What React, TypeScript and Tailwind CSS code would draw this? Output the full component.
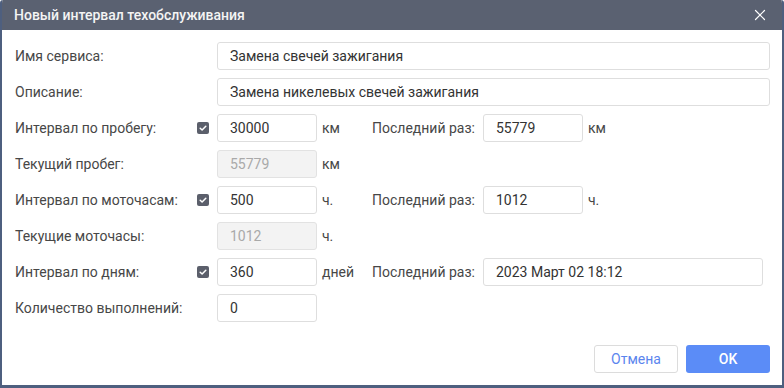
import { X } from 'lucide-react';

type FieldProps = {
  value: string;
  disabled?: boolean;
  className?: string;
};

function Field({ value, disabled = false, className = '' }: FieldProps) {
  return (
    <input
      readOnly
      value={value}
      disabled={disabled}
      className={`h-7 rounded-[3px] border px-3 text-[14px] outline-none ${
        disabled
          ? 'border-[#e2e2e2] bg-[#f3f3f3] text-[#a9a9a9]'
          : 'border-[#dedede] bg-white text-[#333]'
      } ${className}`}
    />
  );
}

function Check() {
  return (
    <span className="flex h-3 w-3 items-center justify-center rounded-[2px] bg-[#5b5f6b]">
      <svg viewBox="0 0 12 12" className="h-3 w-3">
        <path d="M3.2 6.2 L5.1 8 L8.8 4.2" fill="none" stroke="#fff" strokeWidth="1.5" strokeLinecap="round" strokeLinejoin="round" />
      </svg>
    </span>
  );
}

type IntervalRowProps = {
  label: string;
  value: string;
  unit: string;
  checked?: boolean;
  disabled?: boolean;
  last?: string;
  lastUnit?: string;
  lastWide?: boolean;
};

function IntervalRow({ label, value, unit, checked, disabled, last, lastUnit, lastWide }: IntervalRowProps) {
  return (
    <div className="flex h-7 items-center">
      <div className="w-[182px] shrink-0">{label}</div>
      <div className="flex w-5 shrink-0 items-center">{checked ? <Check /> : null}</div>
      <Field value={value} disabled={disabled} className="w-[100px] shrink-0" />
      <div className="w-[55px] shrink-0 pl-[5px]">{unit}</div>
      {last !== undefined ? (
        <>
          <div className="w-[111px] shrink-0">Последний раз:</div>
          <Field value={last} className={lastWide ? 'w-[280px] shrink-0' : 'w-[100px] shrink-0'} />
          {lastUnit ? <div className="pl-[5px]">{lastUnit}</div> : null}
        </>
      ) : null}
    </div>
  );
}

export default function App() {
  return (
    <div
      className="flex h-[388px] w-[784px] flex-col overflow-hidden rounded-t-[3px] border-x-2 border-b-[3px] border-[#4e5f7f] bg-white text-[14px] text-[#474747]"
      style={{ fontFamily: 'Roboto, "Liberation Sans", sans-serif' }}
    >
      <div className="-mx-[2px] flex h-[30px] shrink-0 items-center justify-between bg-[#5a6171] pl-[14px] pr-[15px]">
        <span className="text-[14px] font-medium text-[#f4f4f4]">Новый интервал техобслуживания</span>
        <X className="h-[18px] w-[18px] text-white" strokeWidth={1.6} />
      </div>

      <div className="flex flex-1 flex-col pl-[13px] pr-3 pt-3">
        <div className="flex flex-col gap-2">
          <div className="flex h-7 items-center">
            <div className="w-[202px] shrink-0">Имя сервиса:</div>
            <Field value="Замена свечей зажигания" className="flex-1" />
          </div>
          <div className="flex h-7 items-center">
            <div className="w-[202px] shrink-0">Описание:</div>
            <Field value="Замена никелевых свечей зажигания" className="flex-1" />
          </div>
          <IntervalRow label="Интервал по пробегу:" value="30000" unit="км" checked last="55779" lastUnit="км" />
          <IntervalRow label="Текущий пробег:" value="55779" unit="км" disabled />
          <IntervalRow label="Интервал по моточасам:" value="500" unit="ч." checked last="1012" lastUnit="ч." />
          <IntervalRow label="Текущие моточасы:" value="1012" unit="ч." disabled />
          <IntervalRow label="Интервал по дням:" value="360" unit="дней" checked last="2023 Март 02 18:12" lastWide />
          <div className="flex h-7 items-center">
            <div className="w-[202px] shrink-0">Количество выполнений:</div>
            <Field value="0" className="w-[100px]" />
          </div>
        </div>

        <div className="mt-auto flex justify-end gap-2 pb-3">
          <button
            type="button"
            className="h-7 w-[84px] rounded-[3px] border border-[#dcdcdc] bg-white text-[14px] text-[#5b85ee]"
          >
            Отмена
          </button>
          <button
            type="button"
            className="h-7 w-[84px] rounded-[3px] bg-[#5b8cf7] text-[14px] font-medium text-white"
          >
            OK
          </button>
        </div>
      </div>
    </div>
  );
}
